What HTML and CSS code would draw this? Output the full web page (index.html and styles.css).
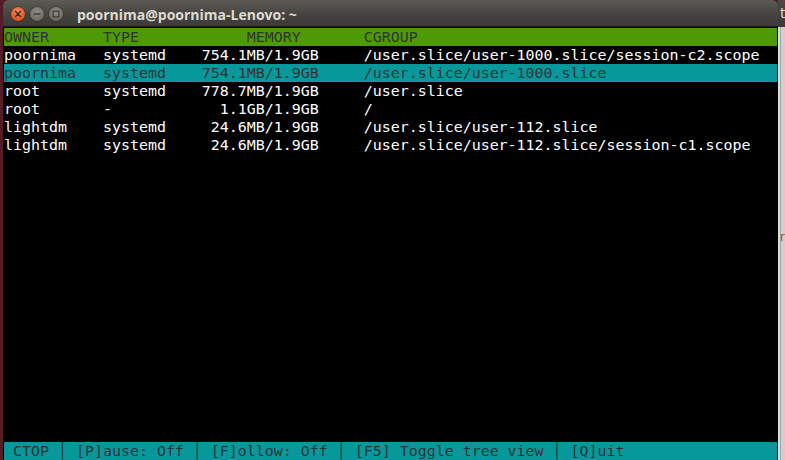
FILE: index.html
```html
<!DOCTYPE html>
<html lang="en">
<head>
<meta charset="utf-8">
<title>poornima@poornima-Lenovo: ~</title>
<link rel="stylesheet" href="styles.css">
</head>
<body>
<div class="desktop">
  <div class="bg-left"></div>
  <div class="window">
    <div class="titlebar">
      <div class="controls">
        <span class="btn close"><svg width="14" height="14" viewBox="0 0 14 14"><path d="M4.6 4.6 L9.4 9.4 M9.4 4.6 L4.6 9.4" stroke="#3c2a22" stroke-width="1.4" stroke-linecap="round"/></svg></span>
        <span class="btn min"><svg width="14" height="14" viewBox="0 0 14 14"><path d="M3.8 7 H10.2" stroke="#3c3b37" stroke-width="1.5"/></svg></span>
        <span class="btn max"><svg width="14" height="14" viewBox="0 0 14 14"><rect x="4.2" y="4.2" width="5.6" height="5.6" fill="none" stroke="#3c3b37" stroke-width="1.3"/></svg></span>
      </div>
      <span class="title">poornima@poornima-Lenovo: ~</span>
    </div>
    <div class="term">
      <div class="line head">OWNER      TYPE            MEMORY       CGROUP</div>
      <div class="line">poornima   systemd    754.1MB/1.9GB     /user.slice/user-1000.slice/session-c2.scope</div>
      <div class="line sel">poornima   systemd    754.1MB/1.9GB     /user.slice/user-1000.slice</div>
      <div class="line">root       systemd    778.7MB/1.9GB     /user.slice</div>
      <div class="line">root       -            1.1GB/1.9GB     /</div>
      <div class="line">lightdm    systemd     24.6MB/1.9GB     /user.slice/user-112.slice</div>
      <div class="line">lightdm    systemd     24.6MB/1.9GB     /user.slice/user-112.slice/session-c1.scope</div>
      <div class="fill"></div>
      <div class="line foot"> CTOP │ [P]ause: Off │ [F]ollow: Off │ [F5] Toggle tree view │ [Q]uit</div>
    </div>
  </div>
  <div class="bg-right">
    <div class="bg-right-top">t</div>
    <div class="bg-right-body"><span class="stray">r</span></div>
  </div>
</div>
</body>
</html>
```
FILE: styles.css
```css
html, body {
  margin: 0;
  padding: 0;
  width: 785px;
  height: 460px;
  overflow: hidden;
  background: #561c25;
}

.desktop {
  display: flex;
  width: 785px;
  height: 460px;
}

.bg-left {
  width: 3px;
  flex: none;
  background: #561c25;
}

.window {
  width: 775px;
  flex: none;
  display: flex;
  flex-direction: column;
}

.titlebar {
  height: 24px;
  padding-top: 2px;
  border-bottom: 1px solid #1e1d1b;
  background: linear-gradient(#5b5a55, #44433f 60%, #3c3b37);
  border-radius: 6px 6px 0 0;
  display: flex;
  align-items: center;
  padding-left: 8px;
  gap: 14px;
}

.controls {
  display: flex;
  gap: 5px;
}

.btn {
  width: 14px;
  height: 14px;
  border-radius: 50%;
  display: flex;
  box-shadow: 0 0 0 0.5px rgba(0, 0, 0, 0.5);
}

.btn svg {
  display: block;
}

.close {
  background: radial-gradient(circle at 50% 35%, #f88a5c, #e5541f 70%, #c8431a);
}

.min,
.max {
  background: radial-gradient(circle at 50% 35%, #8d8c86, #6e6d68 70%, #5a5954);
}

.title {
  font-family: "Open Sans", "DejaVu Sans", sans-serif;
  font-weight: 700;
  font-size: 14px;
  color: #dfdbd2;
  white-space: nowrap;
}

.term {
  flex: 1;
  background: #000;
  padding: 1px 1px 0 1px;
  display: flex;
  flex-direction: column;
  font-family: "DejaVu Sans Mono", "Liberation Mono", monospace;
  font-size: 14.95px;
  color: #ffffff;
}

.line {
  height: 18px;
  box-sizing: border-box;
  padding-top: 1px;
  line-height: 17px;
  white-space: pre;
  overflow: hidden;
}

.head {
  background: #4e9a06;
  color: #2e3436;
}

.sel {
  background: #06989a;
  color: #2e3436;
}

.foot {
  background: #06989a;
  color: #2e3436;
}

.fill {
  flex: 1;
}

.bg-right {
  width: 7px;
  flex: none;
  display: flex;
  flex-direction: column;
  overflow: hidden;
}

.bg-right-top {
  height: 27px;
  background: linear-gradient(#4a4945, #3a3935);
  color: #d8d8d8;
  font-family: "DejaVu Sans", sans-serif;
  font-size: 14px;
  line-height: 27px;
  padding-left: 2px;
}

.bg-right-body {
  flex: 1;
  background: linear-gradient(to right, #dcdcdc 0 2px, #a4a4a4 2px 3px, #cfcfcf 3px);
  padding-top: 200px;
  padding-left: 2px;
}

.stray {
  font-family: "DejaVu Sans", sans-serif;
  font-size: 12px;
  color: #a0522d;
}
```
